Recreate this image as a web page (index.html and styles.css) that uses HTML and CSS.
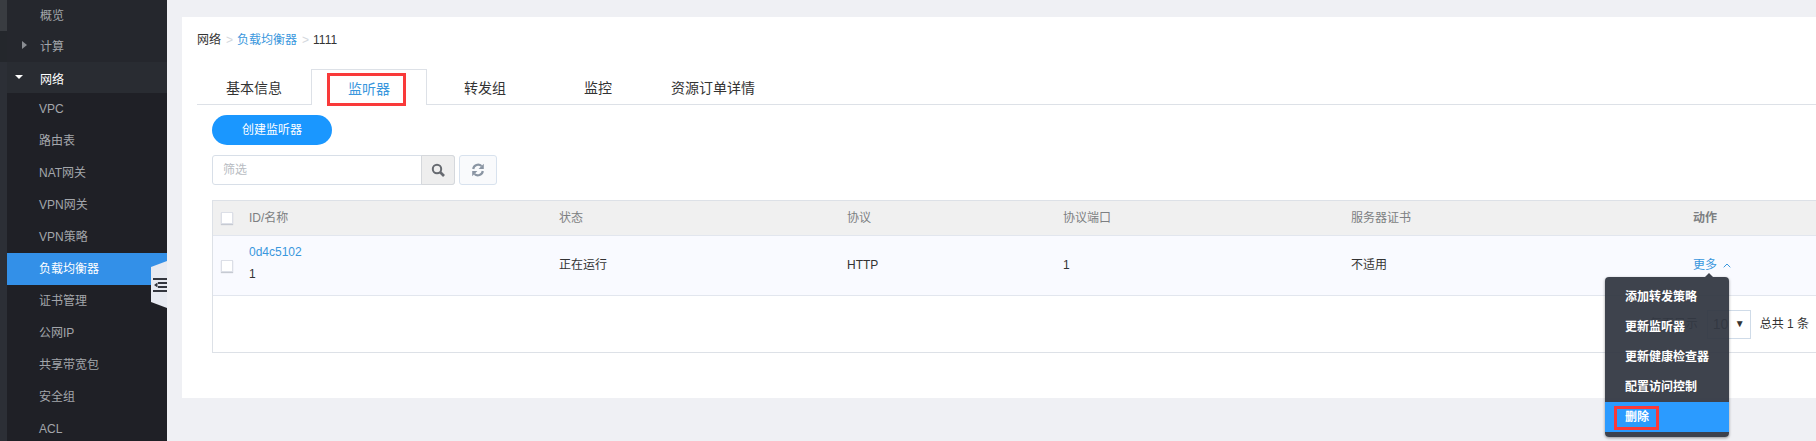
FILE: index.html
```html
<!DOCTYPE html>
<html lang="zh">
<head>
<meta charset="utf-8">
<title>监听器</title>
<link rel="stylesheet" href="styles.css">
</head>
<body>
<div class="app">
  <aside class="sidebar">
    <nav class="nav">
      <div class="nav-item top first">概览</div>
      <div class="nav-item top second"><span class="caret right"></span>计算</div>
      <div class="nav-item top open"><span class="caret down"></span>网络</div>
      <div class="nav-item">VPC</div>
      <div class="nav-item">路由表</div>
      <div class="nav-item">NAT网关</div>
      <div class="nav-item">VPN网关</div>
      <div class="nav-item">VPN策略</div>
      <div class="nav-item active">负载均衡器
        <span class="handle">
          <svg width="14" height="16" viewBox="0 0 14 16"><path d="M0 1h14v2H0zM5 5h9v2H5zM5 9h9v2H5zM0 13h14v2H0zM4.500 5.500v5L1 8z" fill="#33363e"/></svg>
        </span>
      </div>
      <div class="nav-item">证书管理</div>
      <div class="nav-item">公网IP</div>
      <div class="nav-item">共享带宽包</div>
      <div class="nav-item">安全组</div>
      <div class="nav-item">ACL</div>
    </nav>
  </aside>
  <main class="main">
    <section class="card">
      <div class="crumbs"><span>网络</span><i>&gt;</i><a>负载均衡器</a><i>&gt;</i><span>1111</span></div>
      <div class="tabs">
        <div class="tab tab-a">基本信息</div>
        <div class="tab tab-b on">监听器<span class="mark mark-tab"></span></div>
        <div class="tab tab-c">转发组</div>
        <div class="tab tab-d">监控</div>
        <div class="tab tab-e">资源订单详情</div>
      </div>
      <div class="body">
        <button class="create">创建监听器</button>
        <div class="tools">
          <div class="search">
            <span class="ph">筛选</span>
            <span class="sbtn"><svg width="14" height="14" viewBox="0 0 14 14"><circle cx="6" cy="6" r="4.200" fill="none" stroke="#666a70" stroke-width="2"/><path d="M9 9l4 4" stroke="#666a70" stroke-width="2.600"/></svg></span>
          </div>
          <span class="refresh"><svg width="14" height="14" viewBox="0 0 14 14"><path d="M2.200 6A5 5 0 0 1 10.500 3M11.800 8A5 5 0 0 1 3.500 11" fill="none" stroke="#8a95a3" stroke-width="2.200"/><path d="M12.800.8V6H7.600zM1.200 13.200V8H6.400z" fill="#8a95a3"/></svg></span>
        </div>
        <div class="table">
          <div class="tr th">
            <span class="c0"><span class="check"></span></span>
            <span class="c1">ID/名称</span><span class="c2">状态</span><span class="c3">协议</span><span class="c4">协议端口</span><span class="c5">服务器证书</span><span class="c6 bold">动作</span>
          </div>
          <div class="tr td">
            <span class="c0"><span class="check"></span></span>
            <span class="c1 stack"><a>0d4c5102</a><span>1</span></span><span class="c2">正在运行</span><span class="c3">HTTP</span><span class="c4">1</span><span class="c5">不适用</span>
            <span class="c6 more"><a>更多</a><svg width="8" height="5" viewBox="0 0 8 5"><path d="M.7 4.300L4 1l3.300 3.300" fill="none" stroke="#3a97dd"/></svg>
              <div class="menu">
                <div class="mi">添加转发策略</div>
                <div class="mi">更新监听器</div>
                <div class="mi">更新健康检查器</div>
                <div class="mi">配置访问控制</div>
                <div class="mi del">删除<span class="mark mark-del"></span></div>
              </div>
            </span>
          </div>
          <div class="foot">
            <span>每页显示</span>
            <span class="size"><span>10</span><b>▼</b></span>
            <span class="total">总共 1 条</span>
          </div>
        </div>
      </div>
    </section>
  </main>
</div>
</body>
</html>
```
FILE: styles.css
```css
* { box-sizing: border-box; }
html, body { margin: 0; height: 100%; overflow: hidden; }
body { font: 12px/1.2 "Liberation Sans", "Noto Sans CJK SC", sans-serif; color: #333; background: #eff0f4; }
a { color: #3a97dd; }
.app { display: flex; height: 441px; }
.sidebar { width: 167px; flex: none; padding-left: 7px; background: #2c2f36; }
.nav { background: #1f2026; height: 100%; color: #a3a6ab; }
.nav-item { position: relative; height: 32px; line-height: 32px; padding-left: 32px; }
.nav-item.top { background: #25272d; padding-left: 33px; height: 31px; }
.nav-item.first { line-height: 32px; box-shadow: -7px 0 0 #393c41; }
.nav-item.second { box-shadow: -7px 0 0 #24272c; }
.nav-item.open { color: #fff; background: #292c32; line-height: 36px; }
.nav-item.active { background: #3390e8; color: #fff; }
.caret { position: absolute; width: 0; height: 0; }
.caret.right { left: 15px; top: 10px; border: 4px solid transparent; border-left: 5px solid #8a8d92; border-right: 0; }
.caret.down { left: 8px; top: 13px; border: 4px solid transparent; border-top-color: #fff; border-bottom: 0; }
.handle { position: absolute; right: 0; top: 8px; width: 16px; height: 47px; background: #e7eaf1; clip-path: polygon(100% 0, 100% 100%, 0 87%, 0 13%); display: flex; align-items: center; justify-content: flex-end; }
.main { flex: 1; min-width: 0; padding: 17px 0 43px 15px; }
.card { position: relative; background: #fff; height: 381px; padding: 16px 0 0 15px; }
.crumbs { display: flex; height: 14px; align-items: center; color: #333; }
.crumbs i { font-style: normal; color: #d3d7dd; margin: 0 4px 0 5px; }
.tabs { display: flex; height: 35px; margin-top: 22px; border-bottom: 1px solid #dde1e7; align-items: stretch; box-sizing: content-box; }
.tab { position: relative; font-size: 14px; line-height: 39px; text-align: center; color: #333; }
.tab-a { width: 114px; }
.tab-b { width: 116px; }
.tab-c { width: 116px; }
.tab-d { width: 110px; }
.tab-e { width: 120px; }
.tab.on { color: #3a97dd; background: #fff; border: 1px solid #dde1e7; border-bottom: 0; height: 36px; margin-bottom: -1px; line-height: 38px; }
.mark { position: absolute; border: 3px solid #f93a3a; pointer-events: none; }
.mark-tab { left: 15px; top: 3px; width: 79px; height: 33px; }
.mark-del { left: 9px; top: 4px; width: 45px; height: 24px; }
.body { padding: 10px 0 0 15px; }
.create { display: block; width: 120px; height: 30px; border: 0; border-radius: 15px; background: #1a97ff; color: #fff; font: inherit; padding: 0; }
.tools { display: flex; gap: 4px; margin-top: 10px; }
.search { display: flex; width: 243px; height: 30px; border: 1px solid #d8dfe8; border-radius: 3px; align-items: center; }
.ph { flex: 1; padding-left: 10px; color: #b8bcc2; }
.sbtn { width: 34px; height: 30px; margin: 0 -1px 0 0; background: #eee; border: 1px solid #d5d8dc; border-radius: 0 3px 3px 0; display: flex; align-items: center; justify-content: center; }
.refresh { width: 38px; height: 30px; border: 1px solid #d8e2ee; border-radius: 3px; background: #f9fafc; display: flex; align-items: center; justify-content: center; }
.table { width: 1660px; margin-top: 15px; border: 1px solid #dde1e7; height: 153px; }
.tr { display: flex; align-items: center; }
.th { height: 35px; background: #f0f0f0; border-bottom: 1px solid #e2e6ee; color: #7d7f82; }
.td { height: 60px; background: #f9faff; border-bottom: 1px solid #e2e6ee; color: #333; }
.c0 { width: 36px; padding-left: 8px; display: flex; }
.c1 { width: 310px; }
.c2 { width: 288px; }
.c3 { width: 216px; }
.c4 { width: 288px; }
.c5 { width: 342px; }
.c6 { width: 100px; }
.bold { font-weight: bold; }
.check { width: 12px; height: 12px; background: #fff; border: 1px solid #dcdfe7; box-shadow: 0 1px 1px #c6cad2; }
.stack { display: flex; flex-direction: column; gap: 8px; padding-bottom: 6px; }
.stack a, .stack span { line-height: 14px; }
.more { position: relative; display: flex; align-items: center; gap: 6px; }
.menu { position: absolute; left: -88px; top: 19px; width: 124px; height: 160px; padding: 5px 0; background: rgba(47, 53, 64, .93); border-radius: 4px; box-shadow: 0 1px 3px rgba(0,0,0,.4); color: #fff; font-weight: bold; z-index: 2; }
.menu::before { content: ""; position: absolute; right: 16px; top: -4px; border: 4px solid transparent; border-bottom-color: #3e434d; border-top: 0; }
.mi { position: relative; height: 30px; line-height: 30px; padding-left: 20px; }
.del { background: #2b9bff; }
.foot { display: flex; height: 56px; justify-content: flex-end; align-items: center; width: 1596px; color: #666; }
.size { display: flex; justify-content: space-between; align-items: center; width: 44px; height: 29px; margin: 0 9px; padding: 0 5px; border: 1px solid #cfdbe8; color: #666; font-size: 14px; }
.size b { font-size: 10px; color: #333; font-weight: normal; }
.total { color: #333; }
```
